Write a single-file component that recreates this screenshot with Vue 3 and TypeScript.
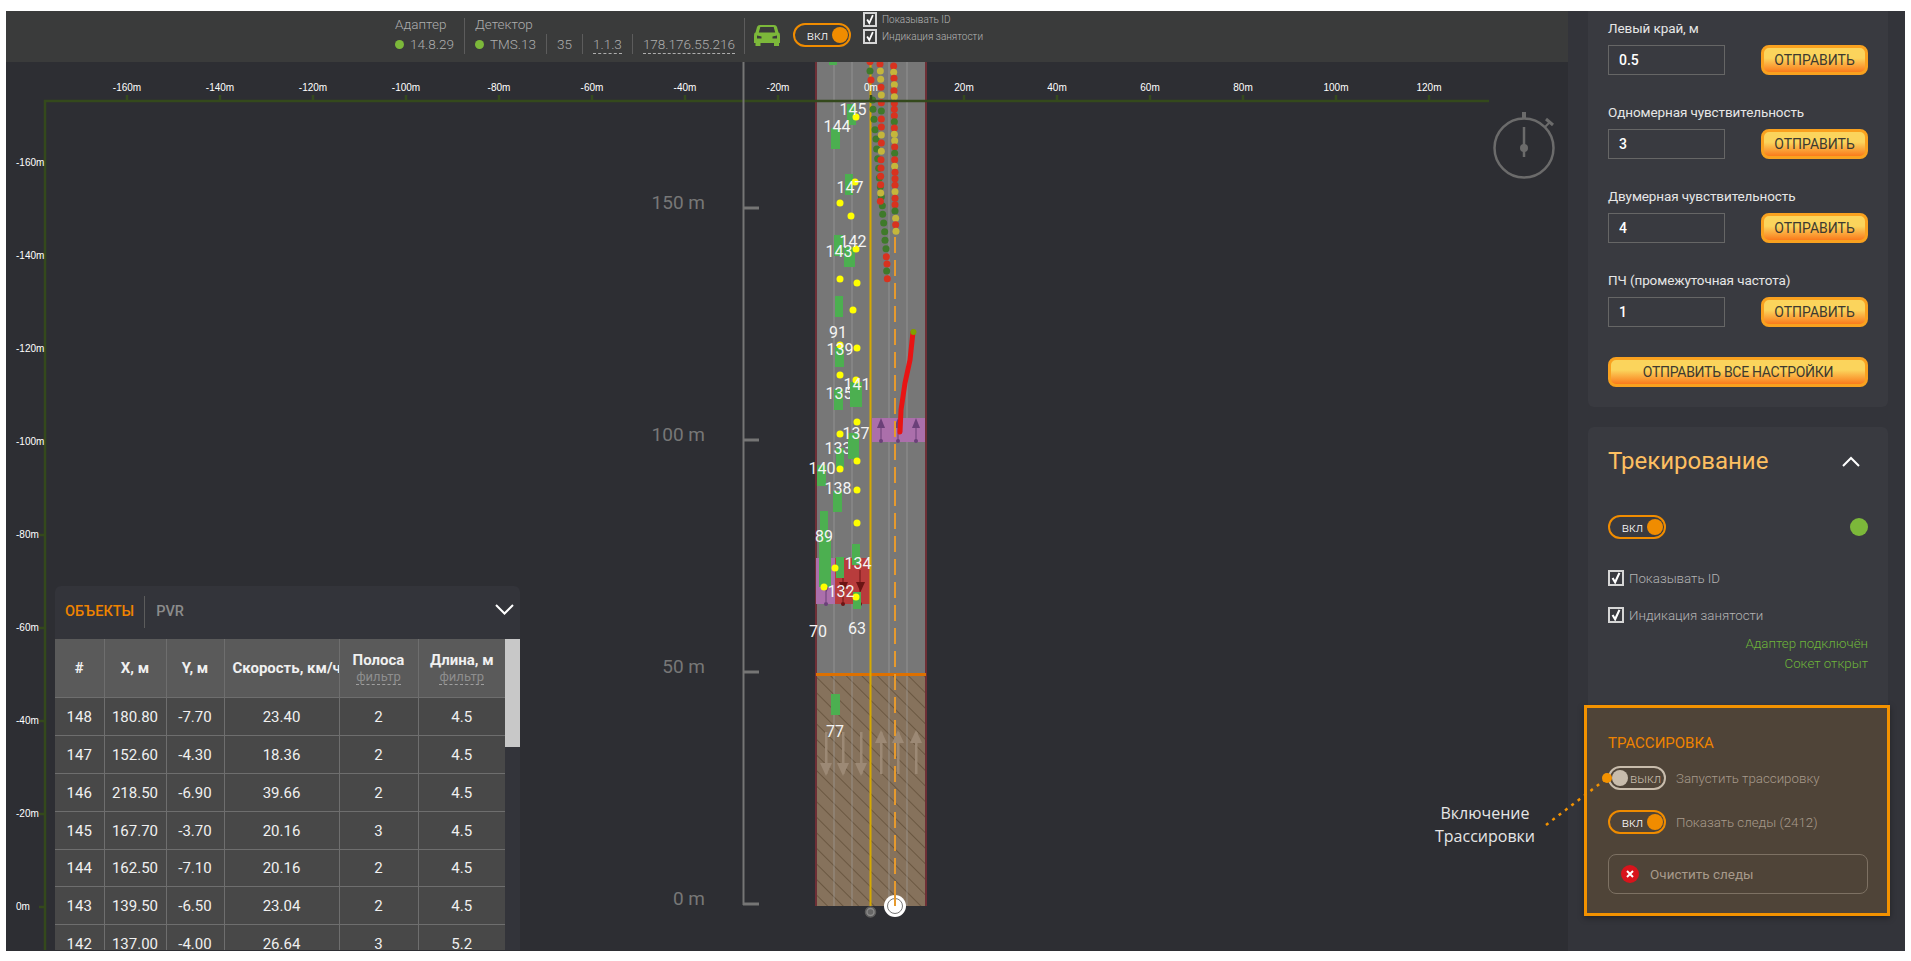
<template>
  <div class="frame">
    <div class="screen">
      <main class="main">
        <header class="topbar">
          <div class="stat stat-adapter">
            <span class="stat-title">Адаптер</span>
            <span class="stat-value"><i class="dot"></i>14.8.29</span>
          </div>
          <div class="stat stat-detector">
            <span class="stat-title">Детектор</span>
            <div class="detector-row">
              <span class="stat-value cell"><i class="dot"></i>TMS.13</span>
              <span class="stat-value cell">35</span>
              <span class="stat-value cell"><u>1.1.3</u></span>
              <span class="stat-value cell"><u>178.176.55.216</u></span>
            </div>
          </div>
          <svg class="car" viewBox="0 0 26 22" width="26" height="22">
            <path fill="#7cb83a" d="M6 0h14c1.500 0 2.500 .8 3 2l1.500 5.500 1 .5c.3 1 .5 2 .5 3v7h-1v3h-5v-3H6.500v3h-5v-3H0v-7c0-1 .2-2 .5-3l1-.5L3 2c.5-1.200 1.500-2 3-2z" />
            <path fill="#3a3b3b" d="M6.300 2h13.400l1.500 5.600H4.800zM3 10.500l4.500 1v2H3zM23 10.500l-4.500 1v2H23z" />
          </svg>
          <div class="toggle on"><span>вкл</span><i></i></div>
          <div class="top-checks">
            <label class="top-check"><span class="box small"><svg viewBox="0 0 14 14"><path d="M3 7l3 5 5-11" /></svg></span>Показывать ID</label>
            <label class="top-check"><span class="box small"><svg viewBox="0 0 14 14"><path d="M3 7l3 5 5-11" /></svg></span>Индикация занятости</label>
          </div>
        </header>

        <div class="canvas">
          <svg class="scene" viewBox="6 62 1562 889" width="1562" height="889">
            <defs>
              <pattern id="hatch" width="11" height="11" patternUnits="userSpaceOnUse" patternTransform="rotate(45)">
                <rect width="11" height="11" fill="#86725c" />
                <line x1="0" y1="0" x2="11" y2="0" stroke="#57452f" stroke-width="1.200" />
              </pattern>
            </defs>

            <!-- дорога -->
            <rect x="816" y="62" width="110" height="844" fill="#777777" />
            <rect x="816" y="674" width="110" height="232" fill="url(#hatch)" />
            <line v-for="x in laneLines" :key="x" :x1="x" y1="62" :x2="x" y2="906" stroke="#a5a5a5" stroke-opacity=".6" stroke-width="1" />
            <line x1="816" y1="62" x2="816" y2="906" stroke="#6e2f36" stroke-width="2" />
            <line x1="926" y1="62" x2="926" y2="906" stroke="#6e2f36" stroke-width="2" />

            <!-- зоны -->
            <rect x="872" y="418" width="53" height="24" fill="#ab6fab" />
            <rect x="816" y="558" width="19" height="46" fill="#ab6fab" />
            <rect x="835" y="558" width="35" height="46" fill="#b83c3c" />
            <g v-for="x in [881, 898, 916]" :key="x" fill="#6b4079">
              <path :d="`M${x} 418l-4 10h8z`" />
              <rect :x="x - .5" y="428" width="1" height="12" />
              <circle :cx="x" cy="441" r="2" />
            </g>
            <g v-for="x in [826, 843, 860]" :key="x" :fill="x === 826 ? '#6b4079' : '#6b1414'">
              <path :d="`M${x - 4} 582h9l-4.500 10z`" />
              <rect :x="x - .5" y="570" width="1" height="32" />
              <circle :cx="x" cy="604" r="2" />
            </g>

            <rect x="816" y="673" width="110" height="3" fill="#dd7000" />
            <g v-for="a in floorArrows" :key="a.x" fill="#9c8975">
              <rect :x="a.x - 1" y="732" width="2.500" height="42" />
              <path v-if="a.down" :d="`M${a.x - 6} 763h12l-6 13z`" />
              <path v-else :d="`M${a.x - 6} 743h12l-6-13z`" />
            </g>

            <line x1="870.500" y1="62" x2="870.500" y2="906" stroke="#d5a900" stroke-width="2" />
            <line x1="895" y1="237" x2="895" y2="906" stroke="#e69a2e" stroke-width="2" stroke-dasharray="16 7" />

            <!-- следы -->
            <circle v-for="(d, i) in trackDots" :key="i" :cx="d[0]" :cy="d[1]" r="3.500" :fill="trackColors[d[2]]" />
            <polyline points="913,332 910,360 905,383 901,410 900,432" fill="none" stroke="#e81414" stroke-width="5" stroke-linecap="round" stroke-linejoin="round" />
            <circle cx="913.500" cy="332" r="3" fill="#7fa000" />

            <!-- объекты: 135 и 133 частично закрыты соседними машинами -->
            <rect v-for="(r, i) in cars" :key="i" :x="r[0]" :y="r[1]" :width="r[2]" :height="r[3]" fill="#4caf50" />
            <text v-for="l in coveredLabels" :key="l.t" class="car-label" :x="l.x" :y="l.y + 6">{{ l.t }}</text>
            <rect v-for="(r, i) in frontCars" :key="i" :x="r[0]" :y="r[1]" :width="r[2]" :height="r[3]" fill="#4caf50" />
            <circle v-for="(d, i) in yellowDots" :key="i" :cx="d[0]" :cy="d[1]" r="3.500" fill="#ffff00" />
            <text v-for="l in carLabels" :key="l.t" class="car-label" :x="l.x" :y="l.y + 6">{{ l.t }}</text>

            <!-- оси -->
            <g fill="none" stroke="#34491c" stroke-width="2.500">
              <path d="M45 950V101H1489" />
              <path v-for="t in xTicks" :key="t.v" :d="`M${t.x} 95V101`" />
              <path v-for="t in yTicks" :key="t.v" :d="`M39 ${t.y}H45`" />
            </g>
            <text v-for="t in xTicks" :key="t.v" class="axis-label" :x="t.x" y="91" text-anchor="middle">{{ t.v }}m</text>
            <text v-for="t in yTicks" :key="t.v" class="axis-label" x="16" :y="t.y + 3">{{ t.v }}m</text>

            <!-- шкала дальности -->
            <line x1="743.500" y1="62" x2="743.500" y2="905" stroke="#757575" stroke-width="2" />
            <g v-for="t in rangeTicks" :key="t.v">
              <line x1="743" :y1="t.y" x2="759" :y2="t.y" stroke="#757575" stroke-width="3" />
              <text class="range-label" x="705" :y="t.y + 1" text-anchor="end">{{ t.v }} m</text>
            </g>

            <!-- радар -->
            <circle cx="870.500" cy="912" r="5" fill="#8a8a8a" stroke="#5c5c5c" stroke-width="1.500" />
            <circle cx="870.500" cy="912" r="2.800" fill="#666" />
            <circle cx="895" cy="906" r="11" fill="#ffffff" />
            <circle cx="895" cy="906" r="7.500" fill="none" stroke="#777" stroke-width="1" />
            <line x1="895" y1="890" x2="895" y2="906" stroke="#e69a2e" stroke-width="2" />

            <!-- секундомер -->
            <g stroke="#6b6b6b" fill="none">
              <circle cx="1524" cy="148" r="29.500" stroke-width="2.500" />
              <line x1="1524" y1="112" x2="1524" y2="119" stroke-width="4" />
              <line x1="1545" y1="127" x2="1550" y2="122" stroke-width="2" />
              <line x1="1546" y1="119" x2="1553" y2="125" stroke-width="3" />
              <line x1="1524" y1="127" x2="1524" y2="157" stroke-width="2.500" />
              <circle cx="1524" cy="148" r="4" fill="#6b6b6b" stroke="none" />
            </g>
          </svg>

          <section class="objects">
            <div class="tabs">
              <span class="tab active">ОБЪЕКТЫ</span>
              <span class="tab">PVR</span>
              <svg class="tabs-chevron" width="19" height="11" viewBox="0 0 19 11"><path d="M1 1l8.500 8.500L18 1" /></svg>
            </div>
            <div class="table-wrap">
              <table class="grid">
                <colgroup>
                  <col v-for="w in colWidths" :key="w" :style="{ width: w + 'px' }" />
                </colgroup>
                <thead>
                  <tr>
                    <th>#</th>
                    <th>X, м</th>
                    <th>Y, м</th>
                    <th class="clip"><span>Скорость, км/ч</span></th>
                    <th>Полоса<em>фильтр</em></th>
                    <th>Длина, м<em>фильтр</em></th>
                  </tr>
                </thead>
                <tbody>
                  <tr v-for="row in rows" :key="row[0]">
                    <td v-for="(c, i) in row" :key="i">{{ c }}</td>
                  </tr>
                </tbody>
              </table>
              <div class="scrollbar"><div class="thumb"></div></div>
            </div>
          </section>
        </div>
      </main>

      <aside class="side">
        <div class="card settings">
          <div v-for="f in fields" :key="f.label" class="field">
            <label>{{ f.label }}</label>
            <div class="field-row">
              <input class="input" :value="f.value" />
              <button class="btn">ОТПРАВИТЬ</button>
            </div>
          </div>
          <button class="btn wide">ОТПРАВИТЬ ВСЕ НАСТРОЙКИ</button>
        </div>

        <div class="card tracking">
          <div class="card-head">
            <h2>Трекирование</h2>
            <svg width="18" height="11" viewBox="0 0 18 11"><path d="M1 10l8-8 8 8" /></svg>
          </div>
          <div class="state-row">
            <div class="toggle on"><span>вкл</span><i></i></div>
            <i class="state-dot"></i>
          </div>
          <label class="check"><span class="box"><svg viewBox="0 0 14 14"><path d="M3 7l3 5 5-11" /></svg></span>Показывать ID</label>
          <label class="check"><span class="box"><svg viewBox="0 0 14 14"><path d="M3 7l3 5 5-11" /></svg></span>Индикация занятости</label>
          <div class="statuses">
            <div class="status">Адаптер подключён</div>
            <div class="status">Сокет открыт</div>
          </div>

          <div class="trace">
            <h3>ТРАССИРОВКА</h3>
            <div class="trace-row">
              <div class="toggle off"><i></i><span>выкл</span></div>
              <span>Запустить трассировку</span>
            </div>
            <div class="trace-row">
              <div class="toggle on"><span>вкл</span><i></i></div>
              <span>Показать следы (2412)</span>
            </div>
            <button class="clear">
              <svg width="18" height="18" viewBox="0 0 18 18">
                <circle cx="9" cy="9" r="9" fill="#d8141c" />
                <path d="M6 6l6 6M12 6l-6 6" stroke="#fff" stroke-width="2" />
              </svg>
              Очистить следы
            </button>
          </div>
        </div>
      </aside>

      <!-- выноска поверх интерфейса -->
      <svg class="callout-line" viewBox="0 0 1911 961" width="1911" height="961">
        <line x1="1546" y1="825" x2="1606" y2="779" stroke="#f39200" stroke-width="2.500" stroke-dasharray="3 5" />
        <circle cx="1607" cy="778" r="5" fill="#f39200" />
      </svg>
      <div class="callout-text">Включение<br />Трассировки</div>
    </div>
  </div>
</template>

<script setup lang="ts">
type Dot = [number, number, number]

const laneLines = [834, 852, 889, 907]
const floorArrows = [
  { x: 826, down: true },
  { x: 843, down: true },
  { x: 861, down: true },
  { x: 881, down: false },
  { x: 898, down: false },
  { x: 916, down: false },
]

const trackColors = ['#d8321f', '#c4b63c', '#3f7a2a']

// 0 красный, 1 жёлтый, 2 зелёный; координаты из кропа 3x
const rawTrack: Dot[] = [
  [270, 35, 0], [270, 63, 2], [273, 90, 0], [278, 150, 2], [279, 178, 2], [282, 208, 2], [285, 239, 2], [288, 267, 2],
  [290, 297, 2], [293, 326, 2], [296, 355, 2], [298, 384, 2], [301, 410, 2], [304, 440, 2], [307, 467, 2], [308, 493, 2],
  [311, 519, 2], [314, 545, 2], [315, 571, 2], [318, 596, 2], [319, 620, 0], [321, 642, 0], [320, 663, 2], [322, 686, 0],
  [300, 42, 0], [301, 63, 1], [302, 88, 1], [303, 112, 0], [304, 135, 1], [304, 158, 0], [304, 183, 2], [304, 207, 0],
  [304, 231, 0], [304, 255, 1], [304, 279, 0], [304, 304, 1], [303, 329, 0], [303, 354, 0], [302, 379, 0], [302, 404, 0],
  [302, 429, 1], [301, 454, 0],
  [341, 48, 0], [341, 67, 1], [342, 85, 0], [343, 104, 1], [342, 122, 0], [343, 140, 1], [343, 160, 0], [343, 178, 0],
  [343, 197, 0], [343, 215, 2], [343, 234, 0], [343, 253, 1], [344, 272, 1], [344, 291, 0], [344, 310, 2], [344, 329, 0],
  [344, 349, 1], [345, 367, 0], [345, 386, 0], [345, 406, 0], [345, 425, 1], [345, 445, 0], [345, 464, 0], [345, 483, 2],
  [347, 505, 1], [347, 524, 0], [348, 544, 1],
]
const trackDots = rawTrack.map((d): Dot => [780 + d[0] / 3, 50 + d[1] / 3, d[2]])

const cars = [
  [829, 62, 8, 3], [847, 104, 9, 21], [831, 128, 9, 21], [845, 174, 8, 21], [834, 235, 9, 21], [844, 247, 11, 20],
  [835, 296, 8, 21], [835, 347, 9, 20], [834, 389, 9, 21], [836, 448, 8, 20],
  [817, 465, 9, 21], [833, 491, 9, 21], [820, 511, 8, 26], [819, 537, 12, 50], [836, 557, 8, 21], [852, 544, 8, 21],
  [853, 592, 8, 17], [831, 694, 9, 21],
]
const frontCars = [
  [850, 382, 12, 25],
  [848, 433, 11, 26],
]

const yellowDots = [
  [856, 117], [855, 182], [840, 203], [851, 216], [856, 249], [840, 279], [857, 283], [853, 310],
  [840, 345], [857, 348], [840, 375], [856, 380], [857, 422], [840, 434], [857, 461], [840, 469],
  [857, 490], [857, 523], [835, 568], [824, 587], [856, 597],
]

const coveredLabels = [
  { t: '135', x: 839, y: 393 },
  { t: '133', x: 838, y: 448 },
]
const carLabels = [
  { t: '145', x: 853, y: 109 }, { t: '144', x: 837, y: 126 }, { t: '147', x: 850, y: 187 }, { t: '143', x: 839, y: 251 },
  { t: '142', x: 853, y: 241 }, { t: '91', x: 838, y: 332 }, { t: '139', x: 840, y: 349 }, { t: '141', x: 857, y: 384 },
  { t: '137', x: 856, y: 433 }, { t: '140', x: 822, y: 468 }, { t: '138', x: 838, y: 488 }, { t: '89', x: 824, y: 536 },
  { t: '134', x: 858, y: 563 }, { t: '132', x: 841, y: 591 }, { t: '70', x: 818, y: 631 }, { t: '63', x: 857, y: 628 },
  { t: '77', x: 835, y: 731 },
]

const xTicks = [-160, -140, -120, -100, -80, -60, -40, -20, 0, 20, 40, 60, 80, 100, 120].map((v) => ({
  v,
  x: 871 + (v / 20) * 93,
}))
const yTicks = [-160, -140, -120, -100, -80, -60, -40, -20, 0].map((v) => ({
  v,
  y: 907 + (v / 20) * 93,
}))
const rangeTicks = [150, 100, 50, 0].map((v) => ({ v, y: 904 - (v / 50) * 232 }))

const colWidths = [49, 62, 58, 115, 79, 87]
const rows = [
  ['148', '180.80', '-7.70', '23.40', '2', '4.5'],
  ['147', '152.60', '-4.30', '18.36', '2', '4.5'],
  ['146', '218.50', '-6.90', '39.66', '2', '4.5'],
  ['145', '167.70', '-3.70', '20.16', '3', '4.5'],
  ['144', '162.50', '-7.10', '20.16', '2', '4.5'],
  ['143', '139.50', '-6.50', '23.04', '2', '4.5'],
  ['142', '137.00', '-4.00', '26.64', '3', '5.2'],
]

const fields = [
  { label: 'Левый край, м', value: '0.5' },
  { label: 'Одномерная чувствительность', value: '3' },
  { label: 'Двумерная чувствительность', value: '4' },
  { label: 'ПЧ (промежуточная частота)', value: '1' },
]
</script>

<style>
html,
body {
  margin: 0;
  background: #fff;
}
</style>

<style scoped>
.frame {
  width: 1911px;
  height: 961px;
  padding: 11px 6px 10px;
  box-sizing: border-box;
  overflow: hidden;
  font-family: Roboto, "Noto Sans", sans-serif;
}

.screen {
  display: flex;
  height: 940px;
  background: #2d2e33;
}

.main {
  width: 1562px;
  display: flex;
  flex-direction: column;
}

.topbar {
  height: 51px;
  flex: none;
  display: flex;
  align-items: flex-start;
  padding-left: 389px;
  box-sizing: border-box;
  background: #3a3b3b;
  color: #aeaeae;
  font-size: 13.5px;
  font-weight: 300;
}

.stat {
  display: flex;
  flex-direction: column;
  height: 36px;
  margin-top: 7px;
  box-sizing: border-box;
  border-right: 1px solid #5c5c5c;
}

.stat-title {
  height: 12px;
  line-height: 12px;
  margin-bottom: 4px;
}

.stat-value {
  height: 20px;
  line-height: 20px;
  white-space: nowrap;
}

.stat-adapter {
  width: 70px;
}

.stat-detector {
  padding-left: 10px;
  width: 280px;
}

.detector-row {
  display: flex;
}

.cell {
  padding: 0 10px;
  border-left: 1px solid #5c5c5c;
}

.cell:first-child {
  padding-left: 0;
  border-left: 0;
}

.cell u {
  text-decoration: none;
  border-bottom: 1px dashed #aeaeae;
  padding-bottom: 1px;
}

.dot {
  display: inline-block;
  width: 9px;
  height: 9px;
  margin-right: 6px;
  border-radius: 50%;
  background: #7cb83a;
}

.car {
  margin: 14px 13px 0 9px;
}

.toggle {
  width: 58px;
  height: 24px;
  box-sizing: border-box;
  flex: none;
  display: flex;
  align-items: center;
  justify-content: flex-end;
  gap: 4px;
  padding: 0 1px;
  border: 2px solid #f08c00;
  border-radius: 12px;
  color: #fff;
  font-size: 13px;
  font-weight: 300;
}

.toggle i {
  width: 16px;
  height: 16px;
  border-radius: 50%;
  background: #f08c00;
}

.topbar .toggle {
  margin-top: 12px;
}

.toggle.off {
  justify-content: flex-start;
  border-color: #c8bcac;
  color: #c8bcac;
  gap: 2px;
  padding: 0 2px;
}

.toggle.off i {
  background: #c8bcac;
}

.top-checks {
  margin-left: 12px;
  display: flex;
  flex-direction: column;
  gap: 2px;
  margin-top: 1px;
}

.top-check {
  display: flex;
  align-items: center;
  gap: 5px;
  height: 15px;
  font-size: 10px;
  color: #b5b5b5;
  white-space: nowrap;
}

.box {
  width: 16px;
  height: 16px;
  flex: none;
  box-sizing: border-box;
  border: 2px solid #d6d6d6;
  display: flex;
}

.box.small {
  width: 14px;
  height: 15px;
}

.box svg {
  width: 100%;
  height: 100%;
}

.box path {
  fill: none;
  stroke: #fff;
  stroke-width: 2.500;
}

.canvas {
  position: relative;
  flex: 1;
  overflow: hidden;
}

.scene {
  position: absolute;
  left: 0;
  top: 0;
  display: block;
}

.car-label {
  fill: #f4f4f4;
  font: 16px Roboto, sans-serif;
  text-anchor: middle;
}

.axis-label {
  fill: #fff;
  font: 10px "Liberation Sans", Arial, sans-serif;
}

.range-label {
  fill: #777;
  font: 19px Roboto, sans-serif;
}

.objects {
  position: absolute;
  left: 49px;
  top: 524px;
  width: 465px;
  height: 364px;
  background: #33343a;
  border-radius: 6px 6px 0 0;
  overflow: hidden;
}

.tabs {
  height: 53px;
  display: flex;
  align-items: center;
  position: relative;
  padding: 0 0 2px 10px;
  box-sizing: border-box;
}

.tab {
  font-size: 14.5px;
  font-weight: 500;
  color: #8c8c8c;
  line-height: 32px;
}

.tab.active {
  color: #ee8300;
  padding-right: 10px;
  margin-right: 11px;
  border-right: 1px solid #5c5c5c;
}

.tabs-chevron {
  position: absolute;
  right: 6px;
  top: 18px;
}

.tabs-chevron path,
.card-head path {
  fill: none;
  stroke: #fff;
  stroke-width: 2;
}

.table-wrap {
  display: flex;
  align-items: flex-start;
}

.grid {
  width: 450px;
  flex: none;
  table-layout: fixed;
  border-collapse: collapse;
  color: #f0f0f0;
  font-size: 15px;
  background: #484848;
}

.grid th {
  height: 58px;
  padding: 0;
  background: #5a5a5a;
  border: 1px solid #6e6e6e;
  border-top: 0;
  font-size: 15px;
  font-weight: 700;
  text-align: center;
  white-space: nowrap;
}

.grid th:first-child,
.grid td:first-child {
  border-left: 0;
}

.grid th:last-child,
.grid td:last-child {
  border-right: 0;
}

.grid .clip {
  overflow: hidden;
  text-align: left;
  padding-left: 8px;
}

.grid th em {
  display: block;
  width: fit-content;
  margin: 0 auto;
  font-style: normal;
  font-weight: 400;
  font-size: 13px;
  line-height: 15px;
  color: #8e8e8e;
  border-bottom: 1px dashed #a0a0a0;
}

.grid td {
  height: 37px;
  padding: 0;
  border: 1px solid #6e6e6e;
  text-align: center;
}

.grid tr:nth-child(5) td {
  height: 36px;
}

.scrollbar {
  width: 15px;
  height: 300px;
  flex: none;
}

.thumb {
  height: 108px;
  background: #c8c8c8;
}

.side {
  width: 337px;
  flex: none;
  background: #33343a;
  padding-left: 20px;
  box-sizing: border-box;
  overflow: hidden;
  color: #e6e6e6;
}

.card {
  width: 300px;
  padding: 0 20px;
  box-sizing: border-box;
  background: #393a40;
  border-radius: 0 0 6px 6px;
}

.settings {
  height: 396px;
  padding-top: 8px;
}

.field {
  height: 84px;
}

.field label {
  display: block;
  height: 26px;
  font-size: 13.5px;
  letter-spacing: -.1px;
  line-height: 18px;
}

.field-row {
  display: flex;
  justify-content: space-between;
}

.input {
  width: 117px;
  height: 30px;
  box-sizing: border-box;
  background: transparent;
  border: 1px solid #666;
  border-radius: 0;
  outline: 0;
  padding: 0 10px;
  color: #fff;
  font: 500 14px Roboto, sans-serif;
}

.btn {
  width: 107px;
  height: 30px;
  padding: 0;
  box-sizing: border-box;
  border: 3px solid #f9a11f;
  border-radius: 8px;
  background: linear-gradient(#fbd45c 0%, #fbd45c 42%, #fa7b1c 100%);
  color: #3d3a30;
  font: 400 14px Roboto, sans-serif;
}

.btn.wide {
  width: 260px;
  display: block;
  margin-top: 2px;
  letter-spacing: -.3px;
}

.tracking {
  height: 478px;
  margin-top: 20px;
  border-radius: 6px;
}

.card-head {
  height: 68px;
  display: flex;
  align-items: center;
  justify-content: space-between;
  padding-right: 8px;
}

.card-head h2 {
  margin: 0;
  font-size: 24px;
  font-weight: 400;
  color: #fdbf61;
}

.state-row {
  display: flex;
  align-items: center;
  justify-content: space-between;
  height: 24px;
  margin-top: 20px;
  margin-bottom: 31px;
}

.state-dot {
  width: 18px;
  height: 18px;
  border-radius: 50%;
  background: #7cb83a;
}

.check {
  display: flex;
  align-items: center;
  gap: 5px;
  height: 16px;
  margin-bottom: 21px;
  font-size: 13.3px;
  font-weight: 300;
  color: #b4b4b4;
}

.statuses {
  margin-top: -10px;
}

.status {
  height: 20px;
  line-height: 20px;
  text-align: right;
  font-size: 13.3px;
  font-weight: 300;
  color: #6eb53a;
}

.trace {
  width: 306px;
  height: 211px;
  margin: 31px 0 0 -24px;
  padding: 26px 21px 0;
  box-sizing: border-box;
  border: 3px solid #f39200;
  background: #4f4438;
  box-shadow: 0 2px 6px rgba(0, 0, 0, .35);
  position: relative;
}

.trace h3 {
  margin: 0 0 14px;
  height: 18px;
  line-height: 18px;
  font-size: 15px;
  font-weight: 400;
  color: #ee8300;
}

.trace-row {
  display: flex;
  align-items: center;
  gap: 10px;
  height: 24px;
  margin-bottom: 20px;
  font-size: 13.3px;
  font-weight: 300;
  color: #a79a8b;
}

.clear {
  width: 260px;
  height: 40px;
  display: flex;
  align-items: center;
  gap: 11px;
  padding: 0 12px;
  box-sizing: border-box;
  background: transparent;
  border: 1px solid #7d7163;
  border-radius: 8px;
  color: #a79a8b;
  font: 400 13.5px Roboto, sans-serif;
}

.callout-line {
  position: absolute;
  left: 0;
  top: 0;
  pointer-events: none;
}

.callout-text {
  position: absolute;
  left: 1415px;
  top: 802px;
  width: 140px;
  text-align: center;
  font: 400 16px/23px "Open Sans", sans-serif;
  color: #e6e6e6;
}
</style>
